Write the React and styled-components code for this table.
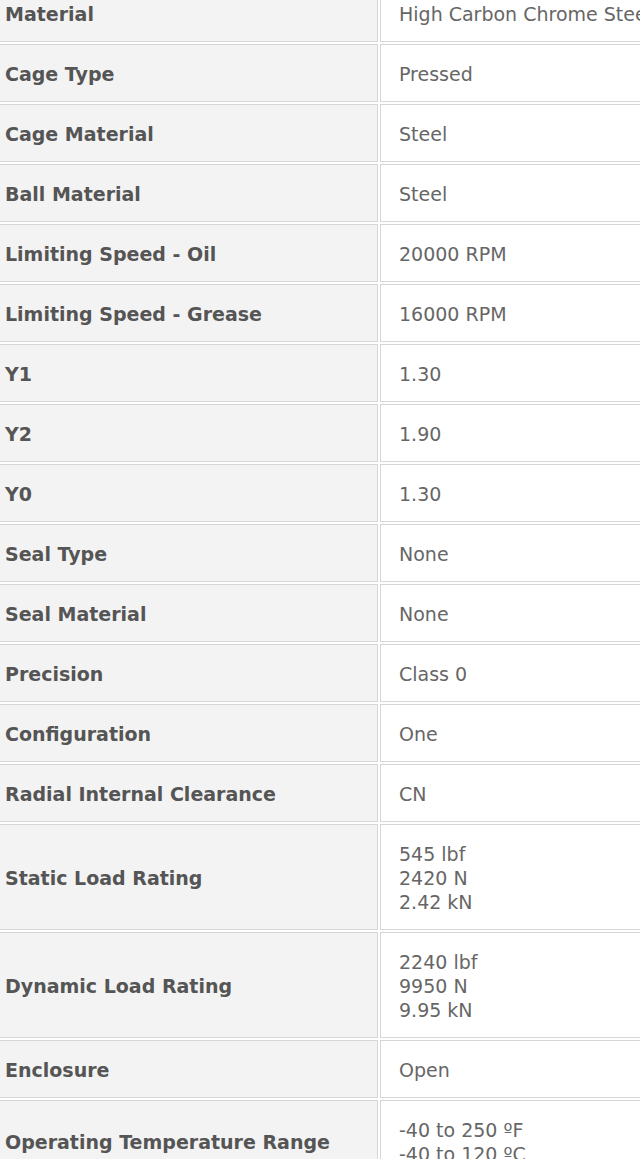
import React from "react";
import styled, { createGlobalStyle } from "styled-components";

const specs = [
  ["Material", ["High Carbon Chrome Steel"]],
  ["Cage Type", ["Pressed"]],
  ["Cage Material", ["Steel"]],
  ["Ball Material", ["Steel"]],
  ["Limiting Speed - Oil", ["20000 RPM"]],
  ["Limiting Speed - Grease", ["16000 RPM"]],
  ["Y1", ["1.30"]],
  ["Y2", ["1.90"]],
  ["Y0", ["1.30"]],
  ["Seal Type", ["None"]],
  ["Seal Material", ["None"]],
  ["Precision", ["Class 0"]],
  ["Configuration", ["One"]],
  ["Radial Internal Clearance", ["CN"]],
  ["Static Load Rating", ["545 lbf", "2420 N", "2.42 kN"]],
  ["Dynamic Load Rating", ["2240 lbf", "9950 N", "9.95 kN"]],
  ["Enclosure", ["Open"]],
  ["Operating Temperature Range", ["-40 to 250 ºF", "-40 to 120 ºC"]],
];

export default function App() {
  return (
    <>
      <GlobalStyle />
      <Viewport>
        <SpecTable>
          <colgroup>
            <col style={{ width: "391px" }} />
            <col style={{ width: "420px" }} />
          </colgroup>
          <tbody>
            {specs.map(([label, values]) => (
              <tr key={label}>
                <Label>{label}</Label>
                <Value>
                  {values.map((v, i) => (
                    <React.Fragment key={v}>
                      {i > 0 && <br />}
                      {v}
                    </React.Fragment>
                  ))}
                </Value>
              </tr>
            ))}
          </tbody>
        </SpecTable>
      </Viewport>
    </>
  );
}

const GlobalStyle = createGlobalStyle`
  body {
    margin: 0;
    background: #fff;
    font-family: "DejaVu Sans", "Noto Sans", sans-serif;
  }
`;

const Viewport = styled.div`
  width: 640px;
  height: 1159px;
  overflow: hidden;
`;

const SpecTable = styled.table`
  table-layout: fixed;
  width: 817px;
  margin: -18px 0 0 -15px;
  border-collapse: separate;
  border-spacing: 2px;
  font-size: 19px;
  line-height: 24px;
`;

const Cell = styled.td`
  border: 1px solid #d6d6d6;
  padding: 17px 17px 15px;
  vertical-align: middle;
  white-space: nowrap;
  overflow: hidden;
`;

const Label = styled(Cell)`
  background: #f3f3f3;
  color: #555;
  font-weight: bold;
`;

const Value = styled(Cell)`
  background: #fff;
  color: #666;
  padding-left: 18px;
`;
